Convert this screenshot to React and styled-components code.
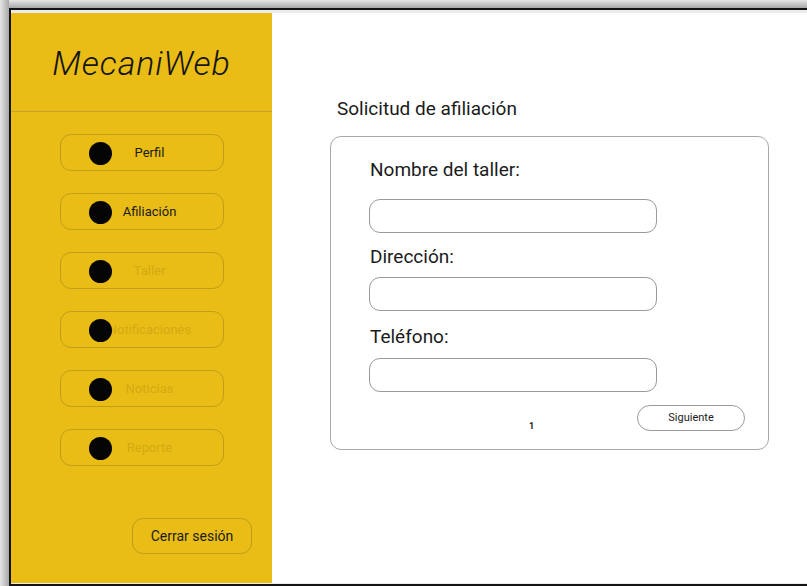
import React from "react";
import styled, { createGlobalStyle } from "styled-components";

const GlobalStyle = createGlobalStyle`
  html, body {
    margin: 0;
    padding: 0;
  }
  body {
    font-family: Roboto, "Liberation Sans", sans-serif;
    color: #1b1b1b;
  }
`;

const Backdrop = styled.div`
  height: 586px;
  box-sizing: border-box;
  padding: 8px 0 0 9px;
  overflow: hidden;
  background: linear-gradient(90deg, #e6e6e6 0px, #a8a8a8 9px, transparent 9px),
    linear-gradient(180deg, #e6e6e6 0px, #a8a8a8 8px, #f2f2f2 8px);
`;

const Screen = styled.div`
  height: 100%;
  box-sizing: border-box;
  border: 2px solid #141414;
  border-right: none;
  padding: 3px 0 1px 0;
  background: #ececec;
  display: flex;
`;

const Sidebar = styled.aside`
  width: 261px;
  flex-shrink: 0;
  background: #e9bd16;
  display: flex;
  flex-direction: column;
`;

const Brand = styled.div`
  height: 99px;
  display: flex;
  align-items: center;
  justify-content: center;
  padding-top: 1px;
  box-sizing: border-box;
  border-bottom: 1px solid #c5a230;
  font-size: 34px;
  font-weight: 300;
  font-style: italic;
  letter-spacing: 0.9px;
  color: #141414;
`;

const Nav = styled.nav`
  display: flex;
  flex-direction: column;
  align-items: center;
  gap: 22px;
  padding-top: 22px;
`;

const NavItem = styled.button`
  position: relative;
  width: 164px;
  height: 37px;
  box-sizing: border-box;
  border: 1px solid rgba(120, 96, 30, 0.35);
  border-radius: 11px;
  background: transparent;
  font-family: inherit;
  font-size: 13px;
  padding: 0 0 0 16px;
  color: ${(p) => (p.$muted ? "#d4a913" : "#1b1b1b")};
  cursor: pointer;
`;

const Dot = styled.span`
  position: absolute;
  left: 28px;
  top: 50%;
  width: 23px;
  height: 23px;
  margin-top: -11px;
  border-radius: 50%;
  background: #050505;
`;

const SidebarFooter = styled.div`
  margin-top: auto;
  display: flex;
  justify-content: flex-end;
  padding: 0 20px 29px 0;
`;

const LogoutButton = styled.button`
  width: 120px;
  height: 36px;
  border: 1px solid rgba(120, 96, 30, 0.35);
  border-radius: 11px;
  background: transparent;
  font-family: inherit;
  font-size: 14px;
  color: #1b1b1b;
  cursor: pointer;
`;

const Main = styled.main`
  flex: 1;
  background: #ffffff;
  padding: 83px 0 0 58px;
`;

const Title = styled.h2`
  margin: 0 0 14px 7px;
  font-size: 19px;
  font-weight: 400;
  line-height: 26px;
`;

const Card = styled.section`
  width: 439px;
  box-sizing: border-box;
  border: 1px solid #a9a9a9;
  border-radius: 11px;
  padding: 21px 23px 18px 38px;
`;

const Field = styled.div`
  margin-top: ${(p) => p.$top || 0}px;
  display: flex;
  flex-direction: column;
  gap: ${(p) => p.$gap}px;
`;

const Label = styled.label`
  font-size: 19px;
  line-height: 24px;
  padding-left: 1px;
`;

const Input = styled.input`
  width: 288px;
  height: 34px;
  box-sizing: border-box;
  border: 1px solid #9a9a9a;
  border-radius: 11px;
  outline: none;
`;

const Footer = styled.div`
  margin-top: 13px;
  display: flex;
  align-items: flex-end;
  justify-content: space-between;
  padding-left: 160px;
`;

const PageNumber = styled.span`
  font-size: 9px;
  font-weight: 700;
  line-height: 12px;
  margin-bottom: -1px;
`;

const NextButton = styled.button`
  width: 108px;
  height: 26px;
  border: 1px solid #9a9a9a;
  border-radius: 13px;
  background: #fff;
  font-family: inherit;
  font-size: 11px;
  padding-bottom: 3px;
  color: #1b1b1b;
  cursor: pointer;
`;

const menu = [
  { label: "Perfil" },
  { label: "Afiliación" },
  { label: "Taller", muted: true },
  { label: "Notificaciones", muted: true },
  { label: "Noticias", muted: true },
  { label: "Reporte", muted: true },
];

const fields = [
  { label: "Nombre del taller:", top: 0, gap: 17 },
  { label: "Dirección:", top: 12, gap: 8 },
  { label: "Teléfono:", top: 14, gap: 9 },
];

const App = () => {
  return (
    <>
      <GlobalStyle />
      <Backdrop>
        <Screen>
          <Sidebar>
            <Brand>MecaniWeb</Brand>
            <Nav>
              {menu.map((item) => (
                <NavItem key={item.label} $muted={item.muted}>
                  <Dot />
                  {item.label}
                </NavItem>
              ))}
            </Nav>
            <SidebarFooter>
              <LogoutButton>Cerrar sesión</LogoutButton>
            </SidebarFooter>
          </Sidebar>

          <Main>
            <Title>Solicitud de afiliación</Title>
            <Card>
              {fields.map((f) => (
                <Field key={f.label} $top={f.top} $gap={f.gap}>
                  <Label>{f.label}</Label>
                  <Input type="text" />
                </Field>
              ))}
              <Footer>
                <PageNumber>1</PageNumber>
                <NextButton>Siguiente</NextButton>
              </Footer>
            </Card>
          </Main>
        </Screen>
      </Backdrop>
    </>
  );
};

export default App;
